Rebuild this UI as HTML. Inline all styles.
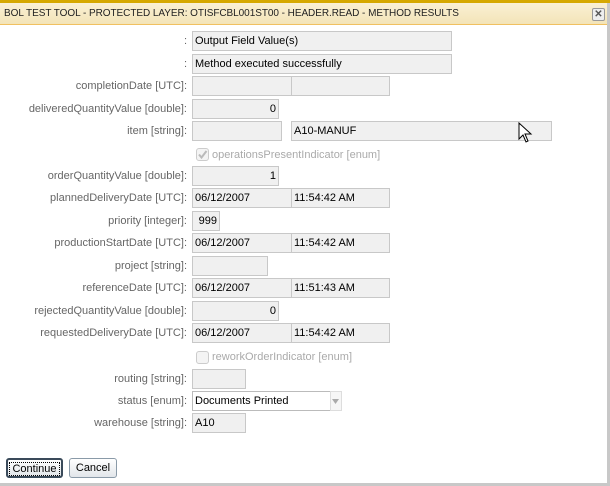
<!DOCTYPE html>
<html><head><meta charset="utf-8"><style>
*{margin:0;padding:0;box-sizing:border-box}
body{width:610px;height:486px;background:#fff;position:relative;overflow:hidden;font-family:"Liberation Sans",sans-serif;font-size:11px;color:#000}
.top{position:absolute;left:0;top:0;width:610px;height:3px;background:#d6a800}
.title{position:absolute;left:0;top:3px;width:607px;height:22px;background:linear-gradient(#faf0d4,#f3e4b8);border-bottom:1px solid #f0c060;font-size:10px;line-height:22px;padding-left:4px;color:#222;letter-spacing:-0.05px}
.rb{position:absolute;left:607px;top:3px;width:3px;height:483px;background:#c8c8c8}
.bb{position:absolute;left:0;top:483px;width:610px;height:3px;background:#c8c8c8}
.x{position:absolute;left:592px;top:8px;width:13px;height:13px;border:1px solid #999;border-radius:2px;background:#eee;font-size:10px;line-height:11px;text-align:center;color:#555;font-weight:bold}
.l{position:absolute;right:423px;color:#666;text-align:right;white-space:nowrap}
.f{position:absolute;height:20px;background:#f0f0f0;border:1px solid #c8c8c8;line-height:18px;padding:0 2px;white-space:nowrap}
.r{text-align:right}
.cb{position:absolute;left:196px;width:13px;height:13px;border:1px solid #ccc;border-radius:3px;background:#f4f4f4}
.ct{position:absolute;left:212px;color:#aaa}
.btn{position:absolute;top:458px;height:20px;border:1px solid #8a9aa8;border-radius:3px;background:linear-gradient(#fff,#e2e6ea);line-height:18px;text-align:center;font-size:11px}
</style></head><body>
<div class="top"></div>
<div class="title">BOL TEST TOOL - PROTECTED LAYER: OTISFCBL001ST00 - HEADER.READ - METHOD RESULTS</div>
<div class="x">✕</div>
<div class="rb"></div><div class="bb"></div>

<div class="l" style="top:35px">:</div><div class="f" style="left:192px;top:31px;width:260px">Output Field Value(s)</div>
<div class="l" style="top:58px">:</div><div class="f" style="left:192px;top:54px;width:260px">Method executed successfully</div>

<div class="l" style="top:80px">completionDate [UTC]:</div><div class="f" style="left:192px;top:76px;width:100px"></div><div class="f" style="left:291px;top:76px;width:99px"></div>
<div class="l" style="top:103px">deliveredQuantityValue [double]:</div><div class="f r" style="left:192px;top:99px;width:87px">0</div>
<div class="l" style="top:125px">item [string]:</div><div class="f" style="left:192px;top:121px;width:90px"></div><div class="f" style="left:291px;top:121px;width:261px">A10-MANUF</div>
<svg style="position:absolute;left:518px;top:122px" width="16" height="24" viewBox="0 0 16 24"><path d="M1 1 L1 17 L5 13 L8 20 L10 19 L7 12 L13 12 Z" fill="#fff" stroke="#000" stroke-width="1"/></svg>

<div class="cb" style="top:148px"><svg width="11" height="11" viewBox="0 0 11 11"><path d="M2 5.5 L4.5 8.5 L9.5 2" fill="none" stroke="#bbb" stroke-width="2"/></svg></div><div class="ct" style="top:149px">operationsPresentIndicator [enum]</div>

<div class="l" style="top:170px">orderQuantityValue [double]:</div><div class="f r" style="left:192px;top:166px;width:87px">1</div>
<div class="l" style="top:192px">plannedDeliveryDate [UTC]:</div><div class="f" style="left:192px;top:188px;width:100px">06/12/2007</div><div class="f" style="left:291px;top:188px;width:99px">11:54:42 AM</div>
<div class="l" style="top:215px">priority [integer]:</div><div class="f r" style="left:192px;top:211px;width:28px">999</div>
<div class="l" style="top:237px">productionStartDate [UTC]:</div><div class="f" style="left:192px;top:233px;width:100px">06/12/2007</div><div class="f" style="left:291px;top:233px;width:99px">11:54:42 AM</div>
<div class="l" style="top:260px">project [string]:</div><div class="f" style="left:192px;top:256px;width:76px"></div>
<div class="l" style="top:282px">referenceDate [UTC]:</div><div class="f" style="left:192px;top:278px;width:100px">06/12/2007</div><div class="f" style="left:291px;top:278px;width:99px">11:51:43 AM</div>
<div class="l" style="top:305px">rejectedQuantityValue [double]:</div><div class="f r" style="left:192px;top:301px;width:87px">0</div>
<div class="l" style="top:327px">requestedDeliveryDate [UTC]:</div><div class="f" style="left:192px;top:323px;width:100px">06/12/2007</div><div class="f" style="left:291px;top:323px;width:99px">11:54:42 AM</div>

<div class="cb" style="top:351px"></div><div class="ct" style="top:351px">reworkOrderIndicator [enum]</div>

<div class="l" style="top:373px">routing [string]:</div><div class="f" style="left:192px;top:369px;width:54px"></div>
<div class="l" style="top:395px">status [enum]:</div><div class="f" style="left:192px;top:391px;width:139px;background:#fff;border-color:#bbb">Documents Printed</div>
<div style="position:absolute;left:330px;top:391px;width:12px;height:20px;border:1px solid #ddd;background:#f6f6f6"><svg width="10" height="18" viewBox="0 0 10 18"><path d="M1 7 L8 7 L4.5 12 Z" fill="#aaa"/></svg></div>
<div class="l" style="top:417px">warehouse [string]:</div><div class="f" style="left:192px;top:413px;width:54px">A10</div>

<div class="btn" style="left:6px;width:57px;border:2px solid #3a4a5a"><span style="border:1px dotted #000;padding:0 2px">Continue</span></div>
<div class="btn" style="left:69px;width:48px">Cancel</div>
</body></html>
